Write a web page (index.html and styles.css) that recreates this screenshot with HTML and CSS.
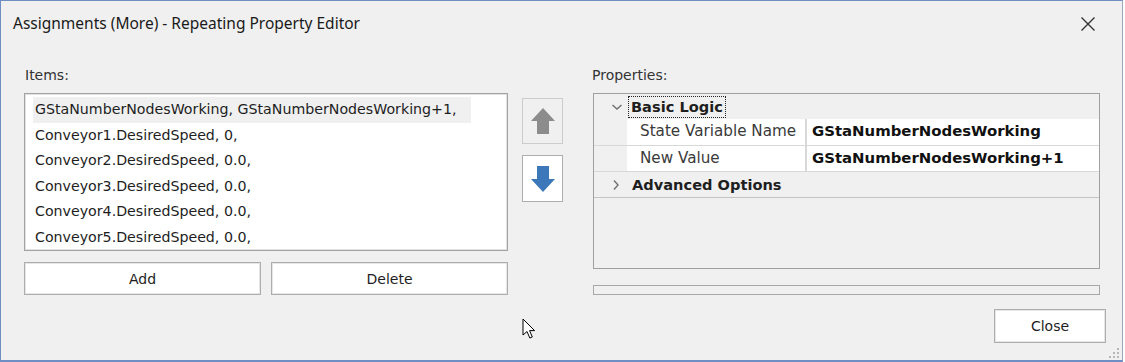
FILE: index.html
```html
<!DOCTYPE html>
<html>
<head>
<meta charset="utf-8">
<link rel="stylesheet" href="styles.css">
</head>
<body>
<div class="window">
  <div class="titlebar">
    <span class="title">Assignments (More) - Repeating Property Editor</span>
    <svg class="close-x" width="16" height="16" viewBox="0 0 16 16"><path d="M1.5 1.5 L14.5 14.5 M14.5 1.5 L1.5 14.5" stroke="#333" stroke-width="1.4" fill="none"/></svg>
  </div>
  <div class="main">
    <div class="left">
      <div class="label">Items:</div>
      <div class="listbox">
        <div class="item selected">GStaNumberNodesWorking, GStaNumberNodesWorking+1,</div>
        <div class="item">Conveyor1.DesiredSpeed, 0,</div>
        <div class="item">Conveyor2.DesiredSpeed, 0.0,</div>
        <div class="item">Conveyor3.DesiredSpeed, 0.0,</div>
        <div class="item">Conveyor4.DesiredSpeed, 0.0,</div>
        <div class="item">Conveyor5.DesiredSpeed, 0.0,</div>
      </div>
      <div class="btnrow">
        <div class="btn">Add</div>
        <div class="btn">Delete</div>
      </div>
    </div>
    <div class="arrows">
      <div class="arrowbtn disabled">
        <svg width="26" height="28" viewBox="0 0 26 28"><path d="M13 1 L25 14 L19 14 L19 27 L7 27 L7 14 L1 14 Z" fill="#8c8c8c"/></svg>
      </div>
      <div class="arrowbtn">
        <svg width="26" height="28" viewBox="0 0 26 28"><path d="M7 1 L19 1 L19 14 L25 14 L13 27 L1 14 L7 14 Z" fill="#3c78b9"/></svg>
      </div>
    </div>
    <div class="right">
      <div class="label">Properties:</div>
      <div class="grid">
        <div class="cat">
          <svg class="chev" width="12" height="8" viewBox="0 0 12 8"><path d="M1.5 2 L6 6 L10.5 2" stroke="#707070" stroke-width="1.4" fill="none"/></svg>
          <span class="cattext focus">Basic Logic</span>
        </div>
        <div class="prop">
          <div class="indent"></div>
          <div class="pname">State Variable Name</div>
          <div class="pval">GStaNumberNodesWorking</div>
        </div>
        <div class="prop">
          <div class="indent"></div>
          <div class="pname">New Value</div>
          <div class="pval">GStaNumberNodesWorking+1</div>
        </div>
        <div class="cat cat2">
          <svg class="chev chev-r" width="8" height="12" viewBox="0 0 8 12"><path d="M2 1.5 L6 6 L2 10.5" stroke="#707070" stroke-width="1.4" fill="none"/></svg>
          <span class="cattext">Advanced Options</span>
        </div>
      </div>
      <div class="desc"></div>
    </div>
  </div>
  <div class="footer">
    <div class="btn closebtn">Close</div>
  </div>
  <svg class="grip" width="14" height="14" viewBox="0 0 14 14">
    <rect x="10" y="2" width="2" height="2" fill="#b8b8b8"/>
    <rect x="6" y="6" width="2" height="2" fill="#b8b8b8"/>
    <rect x="10" y="6" width="2" height="2" fill="#b8b8b8"/>
    <rect x="2" y="10" width="2" height="2" fill="#b8b8b8"/>
    <rect x="6" y="10" width="2" height="2" fill="#b8b8b8"/>
    <rect x="10" y="10" width="2" height="2" fill="#b8b8b8"/>
  </svg>
  <svg class="cursor" width="16" height="24" viewBox="0 0 16 24"><path d="M1 1 L1 17 L5 13.5 L7.8 20 L10.3 19 L7.6 12.6 L12.6 12.6 Z" fill="#fff" stroke="#000" stroke-width="1" stroke-linejoin="miter"/></svg>
</div>
</body>
</html>
```
FILE: styles.css
```css
html, body {
  margin: 0;
  padding: 0;
  background: #ffffff;
}
.window {
  position: relative;
  box-sizing: border-box;
  width: 1123px;
  height: 362px;
  background: #f0f0f0;
  border-left: 1px solid #6f8ec4;
  border-top: 1px solid #6f8ec4;
  border-bottom: 2px solid #6f8ec4;
  border-right: 1px solid #9aa6bd;
  font-family: "DejaVu Sans", Tahoma, sans-serif;
  color: #1e1e1e;
}
.titlebar {
  height: 44px;
  display: flex;
  align-items: center;
  justify-content: space-between;
  padding: 0 26px 0 12px;
  box-sizing: border-box;
}
.title {
  font-family: "Noto Sans", "Open Sans", sans-serif;
  font-size: 15.5px;
  color: #1a1a1a;
  margin-top: -1px;
}
.close-x {
  display: block;
  margin-top: 1px;
}
.main {
  display: flex;
  padding-left: 23px;
  padding-top: 20px;
}
.left {
  width: 484px;
  display: flex;
  flex-direction: column;
}
.label {
  font-size: 14px;
  color: #333;
  height: 28px;
  line-height: 20px;
  padding-left: 1px;
}
.listbox {
  box-sizing: border-box;
  height: 158px;
  background: #fff;
  border: 1px solid #a3a3a3;
  box-shadow: inset 0 0 0 1px #e2e2e2;
  padding: 3px 8px 2px;
}
.item {
  height: 25.5px;
  line-height: 25.5px;
  font-size: 14.2px;
  white-space: nowrap;
  padding-left: 2px;
  color: #1e1e1e;
}
.item.selected {
  background: #f0f0f0;
  width: 436px;
}
.btnrow {
  display: flex;
  gap: 10px;
  margin-top: 11px;
}
.btn {
  box-sizing: border-box;
  height: 33px;
  background: #fff;
  border: 1px solid #adadad;
  box-shadow: inset 0 0 0 1px #e6e6e6;
  display: flex;
  align-items: center;
  justify-content: center;
  font-size: 14px;
  color: #1e1e1e;
  flex: 1;
}
.arrows {
  margin-left: 14px;
  margin-top: 33px;
  width: 41px;
  display: flex;
  flex-direction: column;
  gap: 11px;
}
.arrowbtn {
  box-sizing: border-box;
  width: 41px;
  height: 47px;
  background: #fff;
  border: 1px solid #adadad;
  display: flex;
  align-items: center;
  justify-content: center;
}
.arrowbtn.disabled {
  background: #f0f0f0;
  border-color: #cccccc;
  height: 46px;
}
.right {
  margin-left: 30px;
  width: 507px;
  display: flex;
  flex-direction: column;
}
.right .label {
  margin-left: -2px;
}
.grid {
  box-sizing: border-box;
  height: 176px;
  border: 1px solid #a0a0a0;
  background: #f0f0f0;
  display: flex;
  flex-direction: column;
}
.cat {
  height: 25px;
  display: flex;
  align-items: center;
  font-weight: bold;
  font-size: 14.6px;
  color: #1e1e1e;
}
.cat2 {
  height: 25px;
  border-bottom: 1px solid #c4c4c4;
  border-top: 1px solid #d8d8d8;
}
.chev {
  margin-left: 17px;
  margin-right: 5px;
  display: block;
}
.chev-r {
  margin-left: 18px;
  margin-right: 9px;
}
.cattext {
  padding: 0 2px;
  line-height: 20px;
  border: 1px solid transparent;
}
.cattext.focus {
  border: 1px dotted #222;
}
.prop {
  display: flex;
  height: 26px;
  box-sizing: border-box;
}
.prop + .prop {
  border-top: 1px solid #d8d8d8;
}
.indent {
  width: 33px;
  background: #f0f0f0;
}
.pname {
  width: 180px;
  background: #fff;
  border-right: 2px solid #d8d8d8;
  box-sizing: border-box;
  padding-left: 13px;
  font-size: 15.2px;
  color: #3a3a3a;
  line-height: 25px;
  white-space: nowrap;
}
.pval {
  flex: 1;
  background: #fff;
  padding-left: 5px;
  font-size: 14.9px;
  font-weight: bold;
  color: #111;
  line-height: 25px;
  white-space: nowrap;
}
.desc {
  box-sizing: border-box;
  margin-top: 16px;
  height: 10px;
  border: 1px solid #a8a8a8;
  background: #f0f0f0;
}
.footer {
  display: flex;
  justify-content: flex-end;
  padding-right: 16px;
  margin-top: 14px;
}
.closebtn {
  flex: none;
  width: 112px;
  height: 34px;
}
.grip {
  position: absolute;
  right: 1px;
  bottom: 0px;
}
.cursor {
  position: absolute;
  left: 521px;
  top: 317px;
}
```
